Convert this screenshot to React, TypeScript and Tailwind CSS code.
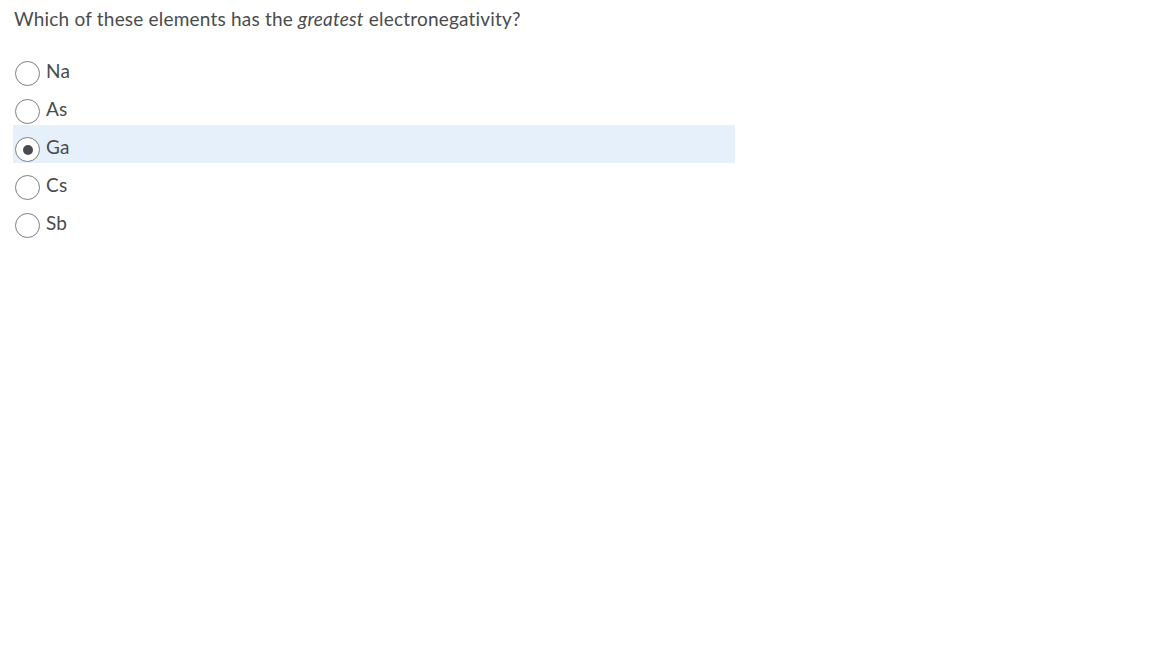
import React from "react";

const options = ["Na", "As", "Ga", "Cs", "Sb"];

export default function App() {
  return (
    <div
      className="min-h-[648px] w-[1152px] bg-white text-[#494c4e]"
      style={{ fontFamily: "Lato, 'Noto Sans', sans-serif" }}
    >
      <div className="pl-[14px] pt-[6px] text-[19px] leading-[26px] tracking-[0.2px]">
        Which of these elements has the <em>greatest</em> electronegativity?
      </div>
      <div className="mt-[17px] pl-[13px]">
        {options.map((o) => {
          const sel = o === "Ga";
          return (
            <div
              key={o}
              className={`flex h-[38px] w-[722px] items-start ${sel ? "bg-[#e6f0fb]" : ""}`}
            >
              <span className="ml-[2px] mt-[12px] flex h-[25px] w-[25px] items-center justify-center rounded-full border border-[#7c8083] bg-white">
                {sel && <span className="h-[10px] w-[10px] rounded-full bg-[#494c4e]" />}
              </span>
              <span className="ml-[6px] mt-[9px] text-[19px] leading-[26px] tracking-[0.2px]">{o}</span>
            </div>
          );
        })}
      </div>
    </div>
  );
}
